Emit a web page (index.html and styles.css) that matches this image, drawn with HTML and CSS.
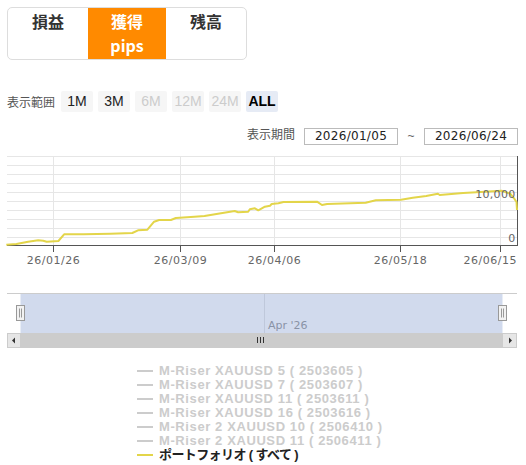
FILE: index.html
```html
<!DOCTYPE html>
<html lang="ja">
<head>
<meta charset="utf-8">
<title>pips</title>
<link rel="stylesheet" href="styles.css">
</head>
<body>
<div class="tabs">
  <div class="tab">損益</div>
  <div class="tab active">獲得<br>pips</div>
  <div class="tab">残高</div>
</div>

<div class="range">
  <span class="label">表示範囲</span>
  <button class="rbtn">1M</button>
  <button class="rbtn">3M</button>
  <button class="rbtn off">6M</button>
  <button class="rbtn off">12M</button>
  <button class="rbtn off">24M</button>
  <button class="rbtn on">ALL</button>
</div>

<div class="period">
  <span class="label">表示期間</span>
  <div class="date">2026/01/05</div>
  <span class="tilde">~</span>
  <div class="date">2026/06/24</div>
</div>

<svg class="chart" width="526" height="200" viewBox="0 0 526 200" xmlns="http://www.w3.org/2000/svg">
  <g class="grid" stroke="#e6e6e6" stroke-width="1">
    <line x1="7" y1="6.5" x2="517" y2="6.5"/>
    <line x1="7" y1="15.5" x2="517" y2="15.5"/>
    <line x1="7" y1="24.5" x2="517" y2="24.5"/>
    <line x1="7" y1="33.5" x2="517" y2="33.5"/>
    <line x1="7" y1="42.5" x2="517" y2="42.5"/>
    <line x1="7" y1="51.5" x2="517" y2="51.5"/>
    <line x1="7" y1="60.5" x2="517" y2="60.5"/>
    <line x1="7" y1="69.5" x2="517" y2="69.5"/>
    <line x1="7" y1="78.5" x2="517" y2="78.5"/>
    <line x1="7" y1="87.5" x2="517" y2="87.5"/>
    <line x1="53.5" y1="6.5" x2="53.5" y2="95"/>
    <line x1="180.5" y1="6.5" x2="180.5" y2="95"/>
    <line x1="274.5" y1="6.5" x2="274.5" y2="95"/>
    <line x1="400.5" y1="6.5" x2="400.5" y2="95"/>
    <line x1="500.5" y1="6.5" x2="500.5" y2="95"/>
  </g>
  <g stroke="#555" stroke-width="1">
    <line x1="7" y1="95.5" x2="517.5" y2="95.5"/>
    <line x1="517.5" y1="6" x2="517.5" y2="96"/>
    <line x1="53.5" y1="95" x2="53.5" y2="102"/>
    <line x1="180.5" y1="95" x2="180.5" y2="102"/>
    <line x1="274.5" y1="95" x2="274.5" y2="102"/>
    <line x1="400.5" y1="95" x2="400.5" y2="102"/>
    <line x1="500.5" y1="95" x2="500.5" y2="102"/>
  </g>
  <polyline class="series" fill="none" stroke="#e3d54a" stroke-width="2" stroke-linejoin="round"
    points="6.3,94.7 16.4,94 28.1,91.7 38.2,90.3 43.2,90.7 46.7,91.7 58.4,91 64.1,84.3 83.5,84.3 110.4,83.7 132.3,83 138,80.3 147.4,79.7 154.1,71.7 159.1,70 170.9,70 175.9,68 194.4,66.7 204.5,66 218,63.7 234.7,61 238.1,62.3 248.2,61.7 249.8,59.3 254.9,58.3 258.3,60.3 264.9,56.7 270,55.7 271.7,54 278.4,53.3 283.5,52 317,51.7 322,55 327.1,54 365.7,52.7 375.8,50.3 401,49.7 412.8,47.7 426.2,46 437.9,43.7 439.7,45 463.1,43 476.6,42.3 501.5,40.8 510,43.5 514,48.3 516.5,52 517,60"/>
  <g class="ylab">
    <text x="515.5" y="48">10,000</text>
    <text x="515.5" y="92">0</text>
  </g>
  <g class="xlab">
    <text x="53.5" y="114">26/01/26</text>
    <text x="180.5" y="114">26/03/09</text>
    <text x="274.5" y="114">26/04/06</text>
    <text x="400.5" y="114">26/05/18</text>
    <text x="517" y="114" text-anchor="end">26/06/15</text>
  </g>

  <!-- navigator -->
  <line x1="264.5" y1="143" x2="264.5" y2="183" stroke="#e6e6e6"/>
  <text class="navlab" x="268" y="179">Apr '26</text>
  <rect x="20.5" y="143.5" width="482" height="39.5" fill="rgba(102,133,194,0.3)"/>
  <line x1="7" y1="143.5" x2="517" y2="143.5" stroke="#cccccc"/>
  <g class="handle">
    <rect x="16.5" y="155.5" width="8" height="15" fill="#f2f2f2" stroke="#999"/>
    <line x1="19.5" y1="158.5" x2="19.5" y2="167.5" stroke="#999"/>
    <line x1="21.5" y1="158.5" x2="21.5" y2="167.5" stroke="#999"/>
    <rect x="498.5" y="155.5" width="8" height="15" fill="#f2f2f2" stroke="#999"/>
    <line x1="501.5" y1="158.5" x2="501.5" y2="167.5" stroke="#999"/>
    <line x1="503.5" y1="158.5" x2="503.5" y2="167.5" stroke="#999"/>
  </g>
  <!-- scrollbar -->
  <rect x="7" y="183" width="510" height="15" fill="#f2f2f2"/>
  <rect x="20" y="183" width="483" height="15" fill="#cccccc"/>
  <rect x="7.5" y="183.5" width="13" height="14" fill="#e6e6e6" stroke="#cccccc"/>
  <rect x="502.5" y="183.5" width="14" height="14" fill="#e6e6e6" stroke="#cccccc"/>
  <path d="M15 187.5 L12 190.5 L15 193.5 Z" fill="#333"/>
  <path d="M509 187.5 L512 190.5 L509 193.5 Z" fill="#333"/>
  <g stroke="#333" stroke-width="1">
    <line x1="257.5" y1="187" x2="257.5" y2="193"/>
    <line x1="260.5" y1="187" x2="260.5" y2="193"/>
    <line x1="263.5" y1="187" x2="263.5" y2="193"/>
  </g>
</svg>

<ul class="legend">
  <li class="item"><span class="mark"></span>M-Riser XAUUSD 5 ( 2503605 )</li>
  <li class="item"><span class="mark"></span>M-Riser XAUUSD 7 ( 2503607 )</li>
  <li class="item"><span class="mark"></span>M-Riser XAUUSD 11 ( 2503611 )</li>
  <li class="item"><span class="mark"></span>M-Riser XAUUSD 16 ( 2503616 )</li>
  <li class="item"><span class="mark"></span>M-Riser 2 XAUUSD 10 ( 2506410 )</li>
  <li class="item"><span class="mark"></span>M-Riser 2 XAUUSD 11 ( 2506411 )</li>
  <li class="item shown"><span class="mark"></span>ポートフォリオ ( すべて )</li>
</ul>
</body>
</html>
```

FILE: styles.css
```css
html, body {
  margin: 0;
  padding: 0;
  background: #ffffff;
}

body {
  width: 526px;
  height: 465px;
  overflow: hidden;
  font-family: "Liberation Sans", "Noto Sans CJK JP", sans-serif;
  color: #333333;
}

.tabs {
  display: flex;
  width: 238px;
  height: 51px;
  margin: 7px 0 0 7px;
  border: 1px solid #dddddd;
  border-radius: 5px;
  overflow: hidden;
}

.tab {
  width: 80px;
  padding-top: 1px;
  text-align: center;
  font-family: "Noto Sans CJK JP", "Liberation Sans", sans-serif;
  font-weight: bold;
  font-size: 16px;
  line-height: 24px;
  color: #333333;
}

.tab.active {
  width: 78px;
  background: #ff8a00;
  color: #ffffff;
}

.range {
  display: flex;
  align-items: center;
  gap: 5px;
  margin: 31px 0 0 7px;
  height: 21px;
}

.label {
  font-family: "Noto Sans CJK JP", sans-serif;
  font-size: 12px;
  color: #555555;
  line-height: 14px;
}

.range .label {
  margin-right: 1px;
}

.rbtn {
  width: 32px;
  height: 21px;
  padding: 0;
  border: none;
  border-radius: 2px;
  background: #f6f6f6;
  font-family: "Liberation Sans", sans-serif;
  font-size: 14px;
  color: #222222;
  line-height: 21px;
}

.rbtn.off {
  color: #cccccc;
}

.rbtn.on {
  background: #e6ebf5;
  font-weight: bold;
  color: #000000;
}

.period {
  display: flex;
  justify-content: flex-end;
  align-items: flex-start;
  height: 17px;
  margin-top: 16px;
  padding-right: 8px;
}

.period .label {
  margin-top: -1px;
  margin-right: 9px;
}

.date {
  box-sizing: border-box;
  width: 94px;
  height: 17px;
  border: 1px solid #bbbbbb;
  text-align: center;
  font-family: "DejaVu Sans", sans-serif;
  font-size: 12px;
  letter-spacing: 0.3px;
  line-height: 15px;
  color: #222222;
}

.tilde {
  width: 26px;
  text-align: center;
  font-size: 12px;
  line-height: 17px;
  color: #666666;
}

.chart {
  display: block;
  margin-top: 5px;
}

.ylab text {
  font-family: "DejaVu Sans", sans-serif;
  font-size: 11px;
  letter-spacing: 0.3px;
  fill: #666666;
  text-anchor: end;
}

.xlab text {
  font-family: "DejaVu Sans", sans-serif;
  font-size: 11px;
  letter-spacing: 0.5px;
  fill: #666666;
  text-anchor: middle;
}

.xlab text:last-child {
  text-anchor: end;
}

.navlab {
  font-family: "DejaVu Sans", sans-serif;
  font-size: 11px;
  fill: #999999;
}

.legend {
  list-style: none;
  margin: 14px 0 0 0;
  padding: 0 0 0 137px;
}

.item {
  display: flex;
  align-items: center;
  gap: 6px;
  height: 14px;
  font-family: "Liberation Sans", "Noto Sans CJK JP", sans-serif;
  font-weight: bold;
  font-size: 13px;
  letter-spacing: 0.6px;
  line-height: 14px;
  color: #cccccc;
  white-space: nowrap;
}

.mark {
  display: block;
  width: 16px;
  height: 2px;
  background: #cccccc;
}

.item.shown {
  color: #222222;
  letter-spacing: -0.6px;
}

.item.shown .mark {
  background: #e3d54a;
}
```
